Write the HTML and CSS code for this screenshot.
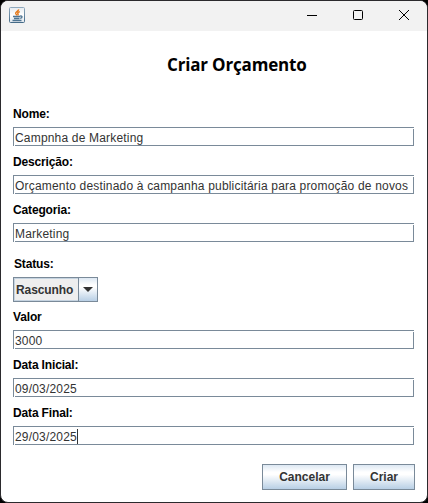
FILE: index.html
```html
<!DOCTYPE html>
<html lang="pt-BR">
<head>
<meta charset="utf-8">
<title>Criar Orçamento</title>
<link rel="stylesheet" href="styles.css">
</head>
<body>
<main class="window">
  <header class="titlebar">
    <svg class="java" width="16" height="16" viewBox="0 0 16 16" fill="none">
      <defs><linearGradient id="g" x1="0" y1="0" x2="0" y2="1"><stop offset="0" stop-color="#8fa9bd"/><stop offset="1" stop-color="#456b88"/></linearGradient>
      <linearGradient id="f" x1="0" y1="0" x2="0" y2="1"><stop offset="0" stop-color="#e6ebef"/><stop offset=".5" stop-color="#fff"/><stop offset="1" stop-color="#dfe6ec"/></linearGradient></defs>
      <rect x=".5" y=".5" width="15" height="15" rx="1" fill="url(#f)" stroke="url(#g)"/>
      <path d="M9.600 2.300C10 4 6.300 4.600 6.700 6.400C6.900 7.200 7.700 7.700 7.800 8.500M10.800 4.600C8.900 5.200 8.300 6 9 6.800C9.400 7.400 9 8 8.700 8.400" stroke="#e57a1c" stroke-width="1.500"/>
      <path d="M4 9.500H11M5 11.500H10.500M3.500 13.500H12.500M11 9.200C13.600 8.300 13.800 10.700 11.200 11.300" stroke="#4f7592" stroke-width="1.300"/>
    </svg>
    <nav class="controls">
      <svg width="10" height="10" viewBox="0 0 10 10"><path d="M0 5.500H10" stroke="#000"/></svg>
      <svg width="10" height="10" viewBox="0 0 10 10"><rect x=".5" y=".5" width="9" height="9" rx="1" fill="none" stroke="#000"/></svg>
      <svg width="10" height="10" viewBox="0 0 10 10"><path d="M0 0L10 10M10 0L0 10" stroke="#000" stroke-width="1"/></svg>
    </nav>
  </header>
  <h1 class="title"><span>Criar Orçamento</span></h1>
  <form class="form">
    <div class="group"><label class="label">Nome:</label><div class="field"><span>Campnha de Marketing</span></div></div>
    <div class="group"><label class="label">Descrição:</label><div class="field"><span>Orçamento destinado à campanha publicitária para promoção de novos</span></div></div>
    <div class="group"><label class="label">Categoria:</label><div class="field"><span>Marketing</span></div></div>
    <div class="group status"><label class="label">Status:</label>
      <div class="combo"><span class="value">Rascunho</span><span class="arrow"><svg width="10" height="5" viewBox="0 0 10 5"><path d="M0 0H10L5 5Z" fill="#333"/></svg></span></div>
    </div>
    <div class="group valor"><label class="label">Valor</label><div class="field"><span>3000</span></div></div>
    <div class="group"><label class="label">Data Inicial:</label><div class="field"><span>09/03/2025</span></div></div>
    <div class="group"><label class="label">Data Final:</label><div class="field"><span>29/03/2025</span><i class="caret"></i></div></div>
    <div class="actions"><button type="button" class="btn cancel">Cancelar</button><button type="button" class="btn create">Criar</button></div>
  </form>
</main>
</body>
</html>
```
FILE: styles.css
```css
* { box-sizing: border-box; }
body { margin: 0; background: #000; font: 12px/14px "Liberation Sans", Arial, sans-serif; color: #333; }
.window { width: 428px; height: 503px; border: 1px solid #2b2a2d; border-radius: 8px; background: #fff; overflow: hidden; }
.titlebar { height: 30px; background: #f2f2f2; display: flex; justify-content: space-between; padding: 6px 18px 0 8px; }
.java { display: block; }
.controls { display: flex; gap: 36px; padding-top: 3px; }
.controls svg { display: block; overflow: visible; }
.title { margin: 0; height: 67px; padding: 22px 0 0 166px; font: bold 17px/24px "Open Sans", "Noto Sans", sans-serif; letter-spacing: -0.17px; color: #000; white-space: nowrap; }
.form { width: 401px; margin-left: 12px; }
.group { padding-top: 9px; }
.label { display: block; margin-bottom: 6px; font-weight: bold; letter-spacing: -0.15px; color: #000; }
.field { height: 19px; display: flex; align-items: flex-start; padding: 4px 0 0 2px; white-space: nowrap; letter-spacing: 0.185px;
  background:
    linear-gradient(#7a8a99, #7a8a99) 0 0 / 100% 1px no-repeat,
    linear-gradient(#7a8a99, #7a8a99) 0 0 / 1px 100% no-repeat,
    linear-gradient(#7a8a99, #7a8a99) 2px 100% / 399px 1px no-repeat,
    linear-gradient(#7a8a99, #7a8a99) 100% 2px / 1px 17px no-repeat; }
.caret { width: 1px; height: 15px; margin-top: -1px; background: #333; }
.status { padding-top: 15px; }
.status .label { padding-left: 1px; }
.valor { padding-top: 8px; }
.combo { width: 85px; height: 25px; display: flex; border: 1px solid #7a8a99; box-shadow: inset 0 0 0 1px #c5d3e0; background: #eee; font-weight: bold; letter-spacing: -0.1px; }
.value { width: 64px; padding: 5px 0 0 2px; }
.arrow { flex: 1; border-left: 1px solid #7a8a99; display: flex; align-items: center; justify-content: center; background: linear-gradient(#dde8f3, #fff 30%, #fff 40%, #b8cfe5); }
.actions { display: flex; justify-content: flex-end; gap: 6px; margin: 19px -1px 0 0; }
.btn { height: 26px; padding: 0; border: 1px solid #7a8a99; background: linear-gradient(#dde8f3, #fff 30%, #fff 40%, #b8cfe5); font: bold 12px/14px "Liberation Sans", Arial, sans-serif; color: #333; }
.cancel { width: 85px; }
.create { width: 62px; }
```
